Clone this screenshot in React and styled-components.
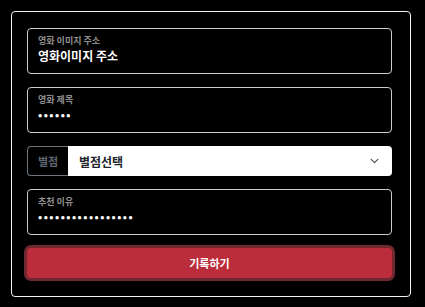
import React from 'react'
import styled, { createGlobalStyle } from 'styled-components'

const Global = createGlobalStyle`
  html, body {
    margin: 0;
    background: #000;
  }
  body {
    font-family: "Noto Sans CJK KR", "Noto Sans", sans-serif;
  }
`

function Field({ label, value, secret }) {
    return (
        <Box>
            <Label>{label}</Label>
            <Value secret={secret}>{value}</Value>
        </Box>
    )
}

function App() {
    return (
        <>
            <Global />
            <Card>
                <Field label="영화 이미지 주소" value="영화이미지 주소" />
                <Field label="영화 제목" value="••••••" secret />
                <SelectRow>
                    <Prefix>별점</Prefix>
                    <Select>
                        <span>별점선택</span>
                        <svg width="9" height="6" viewBox="0 0 16 10" fill="none">
                            <path d="M2 2l6 6 6-6" stroke="#495057" strokeWidth="2" strokeLinecap="round" strokeLinejoin="round" />
                        </svg>
                    </Select>
                </SelectRow>
                <Field label="추천 이유" value="•••••••••••••••••" secret />
                <Submit>기록하기</Submit>
            </Card>
        </>
    )
}

export default App

const Card = styled.div`
margin: 11px 0 0 11px;
width: 400px;
height: 286px;
box-sizing: border-box;
border: 1px solid #f2f2f2;
border-radius: 4px;
padding: 16px 18px 0 15px;
display: flex;
flex-direction: column;
gap: 13px;
`

const Box = styled.div`
height: 46px;
box-sizing: border-box;
border: 1px solid #c9cdd1;
border-radius: 4px;
padding: 6px 10px 0 10px;
display: flex;
flex-direction: column;
gap: 2px;
`

const Label = styled.div`
font-size: 9px;
line-height: 12px;
font-weight: 700;
color: #8f8f8f;
`

const Value = styled.div`
font-size: ${p => (p.secret ? '11px' : '12px')};
line-height: 13px;
font-weight: 700;
color: #fff;
letter-spacing: ${p => (p.secret ? '1.5px' : '0')};
`

const SelectRow = styled.div`
display: flex;
height: 30px;
`

const Prefix = styled.div`
width: 41px;
box-sizing: border-box;
border: 1px solid #6c757d;
border-right: none;
border-radius: 4px 0 0 4px;
background: #000;
color: #5d6670;
font-size: 11px;
font-weight: 700;
display: flex;
align-items: center;
justify-content: center;
`

const Select = styled.div`
flex: 1;
background: #fff;
border-radius: 0 4px 4px 0;
display: flex;
align-items: center;
justify-content: space-between;
padding: 0 13px 0 11px;
font-size: 12px;
font-weight: 700;
color: #212529;
`

const Submit = styled.button`
margin-top: 0;
height: 30px;
border: none;
border-radius: 4px;
background: #bb2d3b;
box-shadow: 0 0 0 3px #6f2830;
color: #fff;
font-family: inherit;
font-size: 11px;
font-weight: 700;
`
